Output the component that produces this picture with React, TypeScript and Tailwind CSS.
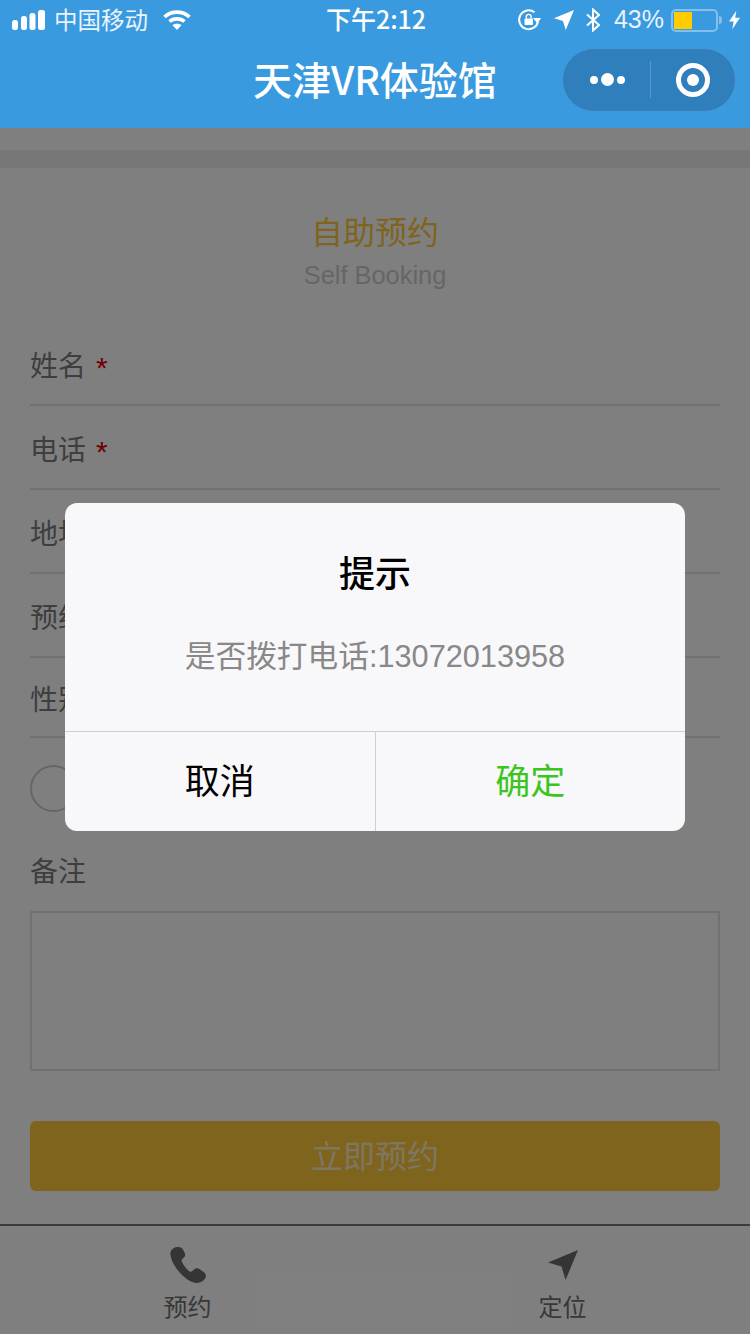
const FONT = "font-['Liberation_Sans','Noto_Sans_CJK_SC',sans-serif]";

const SignalIcon = () => (
  <svg width="34" height="20" viewBox="0 0 34 20" fill="white">
    <rect x="0" y="10" width="6" height="10" rx="2.5" />
    <rect x="9" y="6" width="6" height="14" rx="2.5" />
    <rect x="17.5" y="3" width="6" height="17" rx="2.5" />
    <rect x="26" y="0" width="7" height="20" rx="2.5" />
  </svg>
);

const WifiIcon = () => (
  <svg width="28" height="20" viewBox="0 0 28 20" fill="none" stroke="white" strokeWidth="3.6">
    <path d="M1.5 7C8.5 0.5 19.5 0.5 26.5 7" />
    <path d="M6.5 11.5C10.5 8 17.5 8 21.5 11.5" />
    <path d="M14 20L9.5 15.2C12 13.4 16 13.4 18.5 15.2Z" fill="white" stroke="none" />
  </svg>
);

const RotationLockIcon = () => (
  <svg width="24" height="24" viewBox="0 0 24 24" fill="none">
    <path d="M21 13.5A9.5 9.5 0 1 1 17.5 4.2" stroke="white" strokeWidth="2" />
    <path d="M16 10H24L20.5 15.5Z" fill="white" />
    <rect x="7.5" y="10.5" width="8.5" height="6.5" rx="1" fill="white" />
    <path d="M9.3 10.5V8.8a2.4 2.4 0 0 1 4.8 0v1.7" stroke="white" strokeWidth="1.4" />
  </svg>
);

const ArrowIcon = ({ size, color }: { size: number; color: string }) => (
  <svg width={size} height={size} viewBox="0 0 29 29" fill={color}>
    <path d="M0 12L29 0L17 29L13 16Z" />
  </svg>
);

const BluetoothIcon = () => (
  <svg width="14" height="24" viewBox="0 0 14 24" fill="none" stroke="white" strokeWidth="2">
    <path d="M1 6.5L13 17L7 22.5V1.5L13 7L1 17.5" />
  </svg>
);

const Battery = () => (
  <div className="flex items-center">
    <div className="w-[47px] h-[23px] rounded-[5px] border-2 border-[#85bfec] p-[1px]">
      <div className="w-[18px] h-full bg-[#ffcc00]" />
    </div>
    <div className="w-[3px] h-[8px] ml-[1px] bg-[#85bfec] rounded-r-[3px]" />
  </div>
);

const BoltIcon = () => (
  <svg width="11" height="20" viewBox="0 0 12 20" fill="white">
    <path d="M8 0L0 11.5H5L3.5 20L12 7.5H6.8Z" />
  </svg>
);

const PhoneIcon = () => (
  <svg width="36" height="36" viewBox="0 0 36 36" fill="#6a6a6a">
    <path d="M5.5 0.3C3.6 0.8 0.7 3 0.4 6C0 10.5 3.5 18 8 23.5C13 29.7 20 35.6 26.5 35.9C30.5 36 34.6 33.3 35.6 30.5C36.4 28.2 35.6 26.4 33.6 24.9L29.5 22C27.6 20.8 25.6 20.9 24 22.4L22 24.3C20.6 25.2 19.5 24.6 18 23.2C15.5 20.8 13.3 17.7 11.9 14.8C11.3 13.5 11.5 12.7 12.6 11.8L14 10.5C15.2 9.3 15.5 8 14.9 6.4L13 2.5C11.9 0.2 8.5 -0.5 5.5 0.3Z" />
  </svg>
);

const FormRow = ({ label, required, height }: { label: string; required?: boolean; height: string }) => (
  <div className={`${height} flex items-center pt-[8px] border-b-2 border-[#e2e2e2] text-[28px] text-[#7c7c7c]`}>
    <span>{label}</span>
    {required && <span className="ml-[10px] text-[30px] text-[#e00000]">*</span>}
  </div>
);

export default function App() {
  return (
    <div className={`relative w-[750px] h-[1334px] overflow-hidden bg-white flex flex-col ${FONT}`}>
      {/* nav bar */}
      <div className="h-[128px] shrink-0 bg-[#3a9ae0] text-white">
        <div className="h-[40px] pl-[12px] pr-[10px] grid grid-cols-[1fr_auto_1fr] items-center">
          <div className="flex items-center">
            <SignalIcon />
            <span className="ml-[8px] mt-[3px] text-[23.5px] text-[#e8f3fc]">中国移动</span>
            <span className="ml-[15px]"><WifiIcon /></span>
          </div>
          <div className="text-[25px] font-medium -mt-[2px] font-['Noto_Sans_CJK_SC',sans-serif]">下午2:12</div>
          <div className="flex items-center justify-end">
            <RotationLockIcon />
            <span className="ml-[13px]"><ArrowIcon size={20} color="white" /></span>
            <span className="ml-[12px]"><BluetoothIcon /></span>
            <span className="ml-[14px] text-[25px] text-[#e8f3fc]">43%</span>
            <span className="ml-[7px]"><Battery /></span>
            <span className="ml-[7px]"><BoltIcon /></span>
          </div>
        </div>
        <div className="h-[88px] grid grid-cols-[1fr_auto_1fr] items-center">
          <div />
          <div className="text-[39px] font-medium -mt-[12px] font-['Noto_Sans_CJK_SC',sans-serif]">天津VR体验馆</div>
          <div className="justify-self-end mr-[14px] -mt-[9px] w-[174px] h-[64px] rounded-full bg-[#2f7fbd] border border-[#4a94cf] flex items-center">
            <div className="w-[87px] flex items-center justify-center gap-[3px] pl-[2px]">
              <div className="w-[8px] h-[8px] rounded-full bg-white" />
              <div className="w-[13px] h-[13px] rounded-full bg-white" />
              <div className="w-[8px] h-[8px] rounded-full bg-white" />
            </div>
            <div className="w-px h-[37px] bg-[#5a9bcf]" />
            <div className="flex-1 flex items-center justify-center">
              <div className="w-[34px] h-[34px] rounded-full border-[5px] border-white flex items-center justify-center">
                <div className="w-[12px] h-[12px] rounded-full bg-white" />
              </div>
            </div>
          </div>
        </div>
      </div>

      {/* form */}
      <div className="flex-1 flex flex-col">
        <div className="h-[22px]" />
        <div className="h-[18px] bg-[#eeeeee]" />
        <div className="flex-1 flex flex-col px-[30px]">
          <div className="h-[154px] flex flex-col items-center pt-[43px]">
            <div className="text-[32px] leading-[44px] text-[#ffc83c]">自助预约</div>
            <div className="text-[25.4px] leading-[40px] text-[#cccccc]">Self Booking</div>
          </div>
          <FormRow label="姓名" required height="h-[84px]" />
          <FormRow label="电话" required height="h-[84px]" />
          <FormRow label="地址" height="h-[84px]" />
          <FormRow label="预约时间" height="h-[84px]" />
          <FormRow label="性别" height="h-[80px]" />
          <div className="h-[74px] flex items-center pt-[27px]">
            <div className="w-[47px] h-[47px] rounded-full border-2 border-[#cccccc]" />
          </div>
          <div className="mt-[41px] text-[28px] leading-[40px] text-[#7c7c7c]">备注</div>
          <div className="mt-[18px] h-[160px] border-2 border-[#e2e2e2]" />
          <div className="mt-[50px] h-[70px] rounded-[6px] bg-[#ffc83c] flex items-center justify-center pt-[2px] text-[32px] text-[#ffffff]/70">立即预约</div>
        </div>
        {/* tab bar */}
        <div className="h-[110px] border-t-2 border-[#777777] flex">
          <div className="flex-1 flex flex-col items-center pt-[21px]">
            <PhoneIcon />
            <span className="mt-[9px] text-[24px] leading-[32px] text-[#707070]">预约</span>
          </div>
          <div className="flex-1 flex flex-col items-center pt-[24px]">
            <ArrowIcon size={30} color="#6a6a6a" />
            <span className="mt-[12px] text-[24px] leading-[32px] text-[#707070]">定位</span>
          </div>
        </div>
      </div>

      {/* mask */}
      <div className="absolute left-0 right-0 top-[128px] bottom-0 bg-black/50" />

      {/* dialog */}
      <div className="absolute left-[65px] top-[503px] w-[620px] h-[328px] rounded-[12px] bg-[#f8f7fa] flex flex-col">
        <div className="flex-1 flex flex-col items-center">
          <div className="mt-[47px] text-[36px] leading-[50px] font-medium text-black">提示</div>
          <div className="mt-[36px] text-[30.7px] leading-[42px] text-[#888888]">是否拨打电话:13072013958</div>
        </div>
        <div className="h-[100px] border-t border-[#cfcfcf] flex text-[35px]">
          <div className="flex-1 flex items-center justify-center pt-[2px] border-r border-[#cfcfcf] text-black">取消</div>
          <div className="flex-1 flex items-center justify-center pt-[2px] text-[#3cc51f]">确定</div>
        </div>
      </div>
    </div>
  );
}
